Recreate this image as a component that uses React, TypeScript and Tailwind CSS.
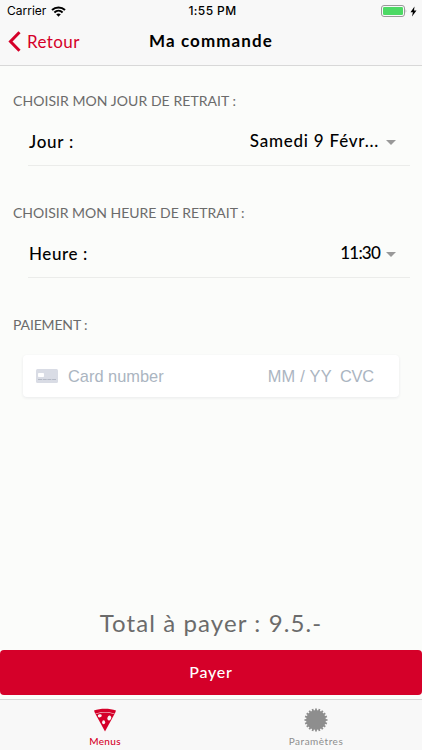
import React from 'react';

const SectionTitle: React.FC<{ label: string; className?: string }> = ({ label, className = '' }) => (
  <h2 className={`w-max whitespace-nowrap pl-[13px] text-[14px] leading-5 text-[#6b6b6b] ${className}`}>{label}</h2>
);

const PickerRow: React.FC<{ label: string; value: string; labelClass?: string; valueClass?: string }> = ({ label, value, labelClass = '', valueClass = '' }) => (
  <div className="ml-7 mr-3 flex h-[55px] items-center justify-between border-b border-[#ebecea] pl-px pr-[14px] pt-[7px] text-[17px] font-medium text-black">
    <span className={labelClass}>{label}</span>
    <button className="flex items-center">
      <span className={`-mt-px ${valueClass}`}>{value}</span>
      <svg className="mt-px h-[5px] w-[10px]" viewBox="0 0 10 5">
        <path d="M0 0h10L5 5z" fill="#999" />
      </svg>
    </button>
  </div>
);

const PizzaIcon = () => (
  <svg className="h-6 w-6" viewBox="0 0 24 24">
    <path d="M1 2.500C7.500.200 16.500.200 23 2.500l-1.200 3.200C15.500 3.400 8.500 3.400 2.200 5.700z" fill="#d50029" />
    <path d="M2.500 6.100C8.500 3.900 15.500 3.900 21.500 6.100L12 23.500z" fill="#d50029" />
    <ellipse cx="6.800" cy="7.800" rx="2" ry="1.500" fill="#f8f8f8" transform="rotate(-15 6.800 7.800)" />
    <ellipse cx="16.300" cy="10" rx="1.900" ry="2.400" fill="#f8f8f8" transform="rotate(25 16.300 10)" />
    <ellipse cx="10.600" cy="14.300" rx="1.500" ry="2" fill="#f8f8f8" />
  </svg>
);

// 20 square teeth around a filled disc
const TEETH = Array.from({ length: 20 }, (_, i) => i * 18);

const GearIcon = () => (
  <svg className="h-6 w-6" viewBox="0 0 24 24" fill="#8e8e8e">
    <circle cx="12" cy="12" r="10" />
    {TEETH.map(angle => (
      <rect key={angle} x="11.100" y="0.500" width="1.800" height="3" transform={`rotate(${angle} 12 12)`} />
    ))}
  </svg>
);

const StatusBar = () => (
  <div className="flex h-[22px] items-center justify-between pl-[7px] pr-[5px] font-['Inter',sans-serif] text-[12px] text-black">
    <div className="flex flex-1 items-center gap-[5px]">
      <span>Carrier</span>
      <svg className="h-[11px] w-[15px]" viewBox="0 0 15 11" fill="none" stroke="#000" strokeWidth="2">
        <path d="M1 4C4.600.500 10.400.500 14 4" />
        <path d="M3.400 6.400C5.800 4.200 9.200 4.200 11.600 6.400" />
        <path d="M5.200 8.300C6.500 7.100 8.500 7.100 9.800 8.300L7.500 10.700z" fill="#000" stroke="none" />
      </svg>
    </div>
    <span className="pl-px font-medium tracking-[0.4px]">1:55 PM</span>
    <div className="flex flex-1 items-center justify-end">
      <svg className="h-3 w-[26px]" viewBox="0 0 26 12">
        <rect x="0.500" y="0.500" width="23" height="11" rx="2.500" fill="none" stroke="#999" />
        <rect x="2" y="2" width="20" height="8" rx="1.300" fill="#4cd964" />
        <path d="M24.700 4q1.300 2 0 4z" fill="#999" />
      </svg>
      <svg className="ml-[3px] h-[11px] w-[7px]" viewBox="0 0 7 11">
        <path d="M4.500.500L.500 6.200h2.400L2 10.500l4.500-6H4z" fill="#000" />
      </svg>
    </div>
  </div>
);

const App: React.FC = () => (
  <div className="flex h-[750px] w-[422px] flex-col overflow-hidden bg-[#fbfcfa] font-['Lato',sans-serif]">
    <header className="h-[66px] shrink-0 border-b border-[#d8d8d8] bg-[#f8f8f8]">
      <StatusBar />
      <div className="flex h-[39px] items-center px-2">
        <button className="flex flex-1 items-center gap-[6px] text-[17px] text-[#d50029]">
          <svg className="h-[21px] w-[13px]" viewBox="0 0 13 21" fill="none" stroke="#d50029" strokeWidth="3">
            <path d="M11.500 1.300L2.500 10.500l9 9.200" />
          </svg>
          <span className="pt-px tracking-[0.4px]">Retour</span>
        </button>
        <h1 className="-mt-[2px] text-[17px] font-bold tracking-[1.1px] text-black">Ma commande</h1>
        <div className="flex-1" />
      </div>
    </header>

    <main className="flex flex-1 flex-col">
      <SectionTitle label="CHOISIR MON JOUR DE RETRAIT :" className="mt-[25px] tracking-[0.06px]" />
      <PickerRow label="Jour :" value="Samedi 9 Févr..." labelClass="tracking-[0.75px]" valueClass="mr-[7px] tracking-[0.77px]" />
      <SectionTitle label="CHOISIR MON HEURE DE RETRAIT :" className="mt-[37px]" />
      <PickerRow label="Heure :" value="11:30" labelClass="tracking-[0.6px]" valueClass="mr-[6px] tracking-[-0.8px]" />
      <SectionTitle label="PAIEMENT :" className="mt-[37px] tracking-[-0.15px]" />

      <div className="mx-[23px] mt-5 flex h-[42px] items-center rounded bg-white pl-[13px] pr-[25px] font-['Liberation_Sans',sans-serif] text-[16.4px] text-[#abb5c1] shadow-[0_1px_3px_rgba(50,50,93,0.09)]">
        <svg className="mr-[10px] h-[14px] w-[22px]" viewBox="0 0 22 14">
          <rect width="22" height="14" rx="1.500" fill="#d9dce5" />
          <rect x="2" y="4" width="6" height="4" rx="0.800" fill="#fff" />
          <path d="M2 10.500h18" stroke="#b4b9c5" strokeDasharray="4 0.700" />
        </svg>
        <span className="flex-1 pt-px">Card number</span>
        <span className="mr-[8px] pt-px tracking-[0.25px]">MM / YY</span>
        <span className="pt-px tracking-[-0.2px]">CVC</span>
      </div>

      <div className="flex-1" />
      <p className="mb-[11px] text-center text-[24px] leading-8 tracking-[1.1px] text-[#6b6b6b]">Total à payer : 9.5.-</p>
      <button className="h-[45px] rounded-[4px] bg-[#d50029] pb-[2px] text-[16px] font-medium tracking-[0.75px] text-white">Payer</button>
    </main>

    <nav className="mt-1 flex h-[51px] shrink-0 border-t border-[#d8d8d8] bg-[#f8f8f8] text-[10px]">
      <button className="flex flex-1 flex-col items-center pr-px pt-2 font-medium text-[#d50029]">
        <PizzaIcon />
        <span className="mt-[2px] tracking-[0.35px]">Menus</span>
      </button>
      <button className="flex flex-1 flex-col items-center pr-px pt-2 text-[#8e8e8e]">
        <GearIcon />
        <span className="mt-[2px] tracking-[0.5px]">Paramètres</span>
      </button>
    </nav>
  </div>
);

export default App;
